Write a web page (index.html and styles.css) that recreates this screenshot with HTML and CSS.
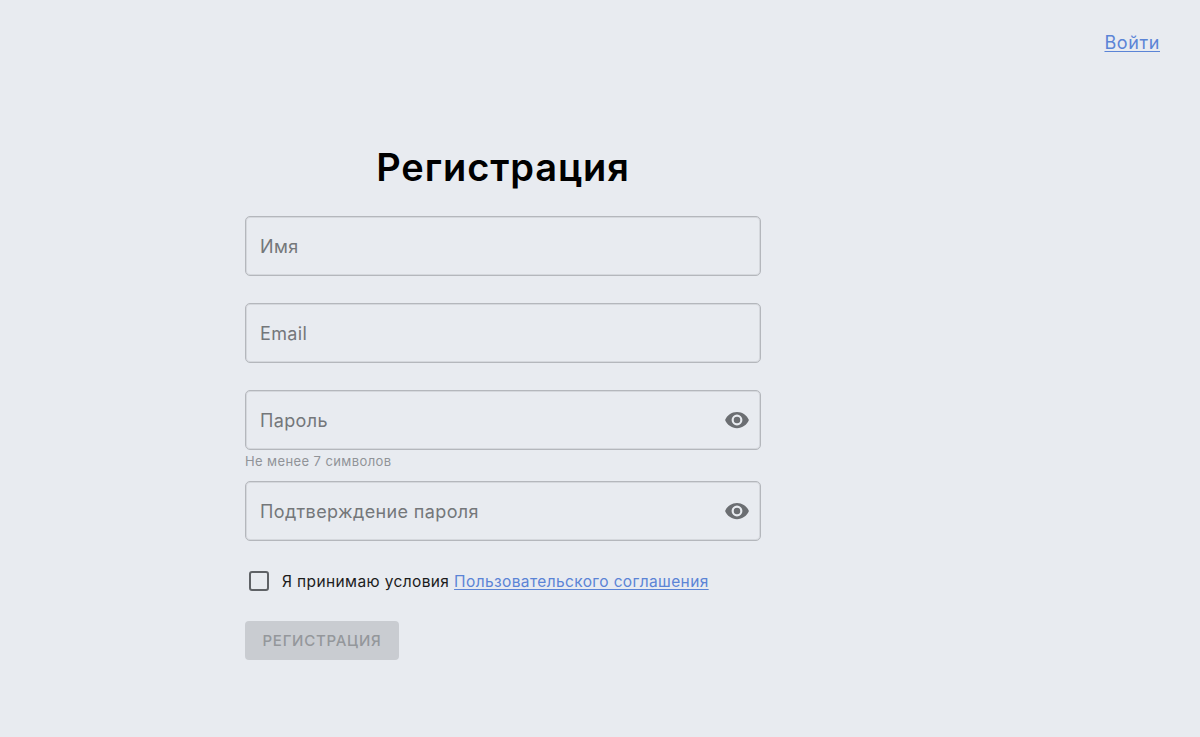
FILE: index.html
```html
<!DOCTYPE html>
<html lang="ru">
<head>
<meta charset="utf-8">
<title>Регистрация</title>
<link rel="stylesheet" href="styles.css">
</head>
<body>
<header class="top"><a class="link login" href="#">Войти</a></header>
<main class="form">
  <h1 class="title">Регистрация</h1>
  <div class="field gap"><span class="ph">Имя</span></div>
  <div class="field gap"><span class="ph">Email</span></div>
  <div class="field"><span class="ph">Пароль</span>
    <svg class="eye" viewBox="0 0 24 24"><path fill-rule="evenodd" d="M12 4.5C7 4.5 2.73 7.61 1 12c1.73 4.39 6 7.5 11 7.5s9.27-3.11 11-7.5c-1.73-4.39-6-7.5-11-7.5zM12 17a5 5 0 1 1 0-10 5 5 0 0 1 0 10zm0-8a3 3 0 1 0 0 6 3 3 0 0 0 0-6z"/></svg>
  </div>
  <div class="hint">Не менее 7 символов</div>
  <div class="field"><span class="ph">Подтверждение пароля</span>
    <svg class="eye" viewBox="0 0 24 24"><path fill-rule="evenodd" d="M12 4.5C7 4.5 2.73 7.61 1 12c1.73 4.39 6 7.5 11 7.5s9.27-3.11 11-7.5c-1.73-4.39-6-7.5-11-7.5zM12 17a5 5 0 1 1 0-10 5 5 0 0 1 0 10zm0-8a3 3 0 1 0 0 6 3 3 0 0 0 0-6z"/></svg>
  </div>
  <div class="agree"><span class="box"></span><span>Я принимаю условия <a class="link" href="#">Пользовательского соглашения</a></span></div>
  <div class="btn">РЕГИСТРАЦИЯ</div>
</main>
</body>
</html>
```

FILE: styles.css
```css
* { box-sizing: border-box; }
html, body { margin: 0; height: 100%; }
body {
  background: #e8ebf0;
  font-family: "Inter", "Noto Sans", sans-serif;
  color: #000;
  overflow: hidden;
}
.top { display: flex; justify-content: flex-end; align-items: flex-start; padding: 31px 40px 0 0; height: 146px; }
.link { color: #5b84d6; text-decoration: underline; text-underline-offset: 2px; text-decoration-thickness: 1px; }
.login { font-size: 18px; line-height: 24px; letter-spacing: .6px; }
.form { width: 516px; margin-left: 245px; }
.title { margin: 0 0 26px; height: 44px; text-align: center; font-size: 38px; line-height: 42px; font-weight: 600; letter-spacing: .9px; }
.field {
  height: 60px; border: 1px solid #b4b7bc; border-radius: 5px;
  box-shadow: inset 0 0 0 1px rgba(185, 188, 193, .4);
  display: flex; align-items: center; justify-content: space-between;
  padding: 0 10px 0 14px;
}
.gap { margin-bottom: 27px; }
.ph { font-size: 18px; color: #74777a; letter-spacing: .37px; }
.eye { width: 26px; height: 26px; fill: #6b6e72; }
.hint { height: 31px; padding-top: 3px; font-size: 13px; line-height: 16px; color: #909398; letter-spacing: .4px; }
.agree { display: flex; align-items: center; gap: 13px; margin: 30px 0 0 4px; height: 20px; font-size: 15.5px; letter-spacing: .38px; color: #1c1c1c; }
.box { width: 20px; height: 20px; border: 2px solid #5f6266; border-radius: 3px; flex: none; }
.btn {
  width: 154px; height: 39px; margin-top: 30px; border-radius: 4px;
  background: #c9ccd1; color: #94979b;
  display: flex; align-items: center; justify-content: center;
  font-size: 15px; font-weight: 500; letter-spacing: .75px;
}
```
